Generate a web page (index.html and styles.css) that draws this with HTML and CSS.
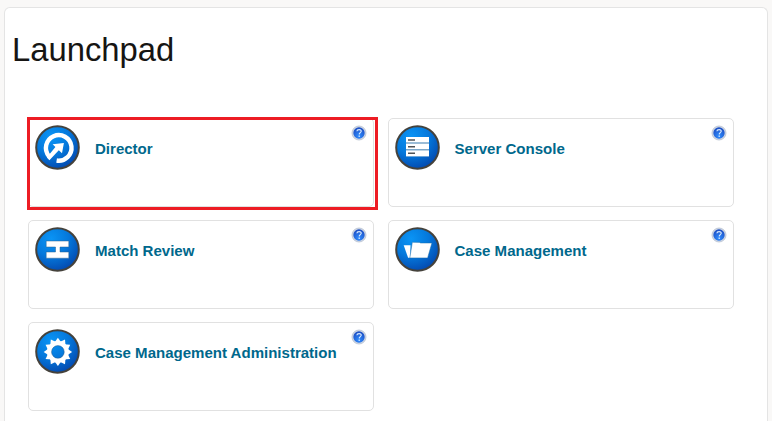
FILE: index.html
```
<!DOCTYPE html>
<html lang="en">
<head>
<meta charset="utf-8">
<title>Launchpad</title>
<link rel="stylesheet" href="styles.css">
</head>
<body>
<svg class="defs" width="0" height="0" aria-hidden="true">
  <defs>
    <radialGradient id="disc" cx="0.35" cy="0.25" r="0.8">
      <stop offset="0" stop-color="#0a94f5"/>
      <stop offset="0.5" stop-color="#0579dc"/>
      <stop offset="1" stop-color="#0347ad"/>
    </radialGradient>
    <radialGradient id="helpfill" cx="0.5" cy="0.75" r="0.7">
      <stop offset="0" stop-color="#2f8dff"/>
      <stop offset="1" stop-color="#1d4fc4"/>
    </radialGradient>
    <symbol id="base" viewBox="0 0 45 45">
      <circle cx="22.5" cy="22.5" r="21.3" fill="url(#disc)" stroke="#45423c" stroke-width="2"/>
    </symbol>
    <symbol id="help" viewBox="0 0 16 16">
      <circle cx="8" cy="8" r="7" fill="#d3dae5" stroke="#b4bfd0" stroke-width="0.8"/>
      <circle cx="8" cy="8" r="5.7" fill="url(#helpfill)"/>
      <path d="M5.9 6.2C6 4.2 10.3 4.1 10.2 6.3C10.1 7.6 8.3 7.7 8.2 9.4M8.2 10.6V11.9" fill="none" stroke="#d8eaff" stroke-width="1.2"/>
    </symbol>
  </defs>
</svg>
<main class="panel">
  <h1 class="title">Launchpad</h1>
  <div class="grid">
    <section class="card selected">
      <svg class="icon" viewBox="0 0 45 45">
        <use href="#base"/>
        <path d="M14 31.2A12.8 12.8 0 1 1 21.6 35.5" fill="none" stroke="#fff" stroke-width="4.4"/>
        <path d="M28.9 18L17.6 19.3L20.4 22L11.8 32.4L14.4 35.2L23.8 25.3L27 28.2Z" fill="#fff"/>
      </svg>
      <h2 class="name">Director</h2>
      <svg class="help"><use href="#help"/></svg>
    </section>
    <section class="card">
      <svg class="icon" viewBox="0 0 45 45">
        <use href="#base"/>
        <path d="M11 12H34V31.5H11Z" fill="#7aa6c8"/>
        <path d="M11 12H34V17.3H11ZM11 18.7H34V24.1H11ZM11 25.6H34V31.2H11Z" fill="#fff"/>
        <path d="M13 15.1H20M13 21.7H20M13 28.3H20" stroke="#4f5357" stroke-width="1.5"/>
      </svg>
      <h2 class="name">Server Console</h2>
      <svg class="help"><use href="#help"/></svg>
    </section>
    <section class="card">
      <svg class="icon" viewBox="0 0 45 45">
        <use href="#base"/>
        <path d="M11.2 14H33.8V20H25V25H33.8V31.2H11.2V25H20.5V20H11.2Z" fill="#fff" stroke="#28638f" stroke-width="0.5"/>
      </svg>
      <h2 class="name">Match Review</h2>
      <svg class="help"><use href="#help"/></svg>
    </section>
    <section class="card">
      <svg class="icon" viewBox="0 0 45 45">
        <use href="#base"/>
        <path d="M8.7 18.3H15.5L15.2 30.8H13.1Z" fill="#fff"/>
        <path d="M17.3 15.3L25.2 15.4V16H36.9L32.6 30.9H14.8Z" fill="#fff" stroke="#1b6dab" stroke-width="0.5"/>
      </svg>
      <h2 class="name">Case Management</h2>
      <svg class="help"><use href="#help"/></svg>
    </section>
    <section class="card">
      <svg class="icon" viewBox="0 0 45 45">
        <use href="#base"/>
        <defs><path id="tooth" d="M19.2 14L22.9 8.7L26.6 14Z" fill="#fff"/></defs>
        <circle cx="22.9" cy="22.9" r="8.6" fill="none" stroke="#fff" stroke-width="4.4"/>
        <use href="#tooth"/>
        <use href="#tooth" transform="rotate(30 22.9 22.9)"/>
        <use href="#tooth" transform="rotate(60 22.9 22.9)"/>
        <use href="#tooth" transform="rotate(90 22.9 22.9)"/>
        <use href="#tooth" transform="rotate(120 22.9 22.9)"/>
        <use href="#tooth" transform="rotate(150 22.9 22.9)"/>
        <use href="#tooth" transform="rotate(180 22.9 22.9)"/>
        <use href="#tooth" transform="rotate(210 22.9 22.9)"/>
        <use href="#tooth" transform="rotate(240 22.9 22.9)"/>
        <use href="#tooth" transform="rotate(270 22.9 22.9)"/>
        <use href="#tooth" transform="rotate(300 22.9 22.9)"/>
        <use href="#tooth" transform="rotate(330 22.9 22.9)"/>
        <circle cx="22.9" cy="22.9" r="6.3" fill="none" stroke="#2c5f8d" stroke-width="0.5"/>
      </svg>
      <h2 class="name">Case Management Administration</h2>
      <svg class="help"><use href="#help"/></svg>
    </section>
  </div>
</main>
</body>
</html>
```

FILE: styles.css
```
* { box-sizing: border-box; }

html, body { height: 100%; }

body {
  margin: 0;
  padding: 7px 4px 0;
  background: #f9f8f7;
  font-family: "Liberation Sans", Arial, sans-serif;
}

.defs { position: absolute; }

.panel {
  height: 100%;
  border: 1px solid #e4e4e4;
  border-bottom: 0;
  border-radius: 6px 6px 0 0;
  background: #fff;
}

.title {
  margin: 0;
  padding: 22px 0 0 7px;
  height: 110px;
  font-size: 32.8px;
  line-height: 40px;
  font-weight: 400;
  color: #161513;
}

.grid {
  display: grid;
  grid-template-columns: 346px 346px;
  grid-auto-rows: 89px;
  gap: 13px 13.5px;
  padding-left: 23px;
}

.card {
  position: relative;
  display: flex;
  align-items: flex-start;
  padding: 6px 6px 0;
  border: 1px solid #e1e1e1;
  border-radius: 5px;
}

.selected::after {
  content: "";
  position: absolute;
  inset: -2px -5px -4px -2px;
  border: 3px solid #ed1c24;
}

.icon { width: 45px; height: 45px; flex: none; }

.name {
  flex: 1;
  margin: 14px 0 0 15px;
  font-size: 15.04px;
  line-height: 20px;
  font-weight: 700;
  color: #00688c;
  white-space: nowrap;
}

.help { width: 16px; height: 16px; flex: none; }
```
